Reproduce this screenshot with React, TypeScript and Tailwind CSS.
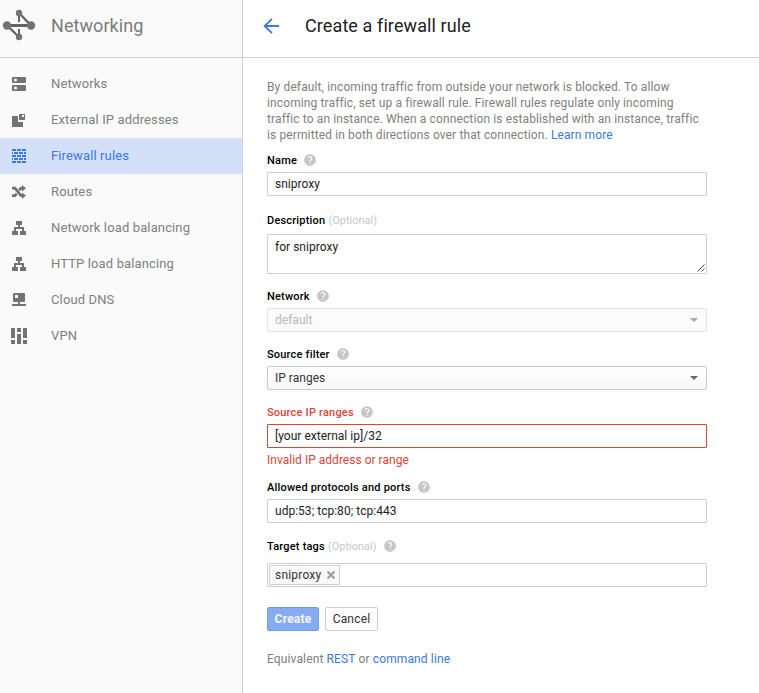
import type { ReactNode } from "react";
import { MdHelp } from "react-icons/md";

const NetworkingLogo = () => (
  <svg width="38" height="50" viewBox="0 0 38 50" fill="#737373" stroke="#636363">
    <path d="M7 25.5H31" strokeWidth="3" />
    <path d="M19 13L31 25.5M7 25.5L19 37" strokeWidth="2.4" />
    <path d="M19 13V22M19 29V37" strokeWidth="2" />
    <g stroke="none">
      <circle cx="19" cy="13" r="3.2" />
      <circle cx="19" cy="37" r="3.2" />
      <circle cx="7" cy="25.5" r="4.2" />
      <circle cx="31" cy="25.5" r="4.2" />
    </g>
  </svg>
);

const Balancing = () => <path d="M4 0h6v4H8v2h4v4h2v4H8v-4h2V8H4v2h2v4H0v-4h2V6h4V4H4z" />;

const NAV: { label: string; icon: ReactNode; active?: boolean }[] = [
  {
    label: "Networks",
    icon: (
      <path
        fillRule="evenodd"
        d="M1 0h12a1 1 0 0 1 1 1v4a1 1 0 0 1-1 1H1a1 1 0 0 1-1-1V1a1 1 0 0 1 1-1zM3.5 1.5a1.5 1.5 0 1 0 0 3a1.5 1.5 0 1 0 0-3zM1 8h12a1 1 0 0 1 1 1v4a1 1 0 0 1-1 1H1a1 1 0 0 1-1-1V9a1 1 0 0 1 1-1zM3.5 9.5a1.5 1.5 0 1 0 0 3a1.5 1.5 0 1 0 0-3z"
      />
    ),
  },
  {
    label: "External IP addresses",
    icon: <path fillRule="evenodd" d="M0 3h6v6h5v5H0zM7.5 1h5a.5.5 0 0 1 .5.5v5a.5.5 0 0 1-.5.5h-5a.5.5 0 0 1-.5-.5v-5a.5.5 0 0 1 .5-.5zM10 2v2h2V2z" />,
  },
  {
    label: "Firewall rules",
    active: true,
    icon: (
      <path d="M0 0h4v2H0zM5 0h4v2H5zM10 0h4v2h-4zM0 3h1v2H0zM2 3h4v2H2zM7 3h4v2H7zM12 3h2v2h-2zM0 6h4v2H0zM5 6h4v2H5zM10 6h4v2h-4zM0 9h1v2H0zM2 9h4v2H2zM7 9h4v2H7zM12 9h2v2h-2zM0 12h4v2H0zM5 12h4v2H5zM10 12h4v2h-4z" />
    ),
  },
  {
    label: "Routes",
    icon: (
      <>
        <path d="M0 3.2h3l6 7.4h2M0 10.6h3l1.7-2M7.2 5.4l1.8-2.2h2" fill="none" stroke="currentColor" strokeWidth="2.7" />
        <path d="M10 0l4 3.2L10 6.6zM10 7.4l4 3.2l-4 3.3z" />
      </>
    ),
  },
  { label: "Network load balancing", icon: <Balancing /> },
  { label: "HTTP load balancing", icon: <Balancing /> },
  {
    label: "Cloud DNS",
    icon: <path fillRule="evenodd" d="M2 0h10a1 1 0 0 1 1 1v7a1 1 0 0 1-1 1H8v2h6v2H0v-2h6V9H2a1 1 0 0 1-1-1V1a1 1 0 0 1 1-1zM3 2v3h3V2z" />,
  },
  {
    label: "VPN",
    icon: <path d="M-1-1h4v10h-4zM-1 11h4v4h-4zM5-1h4v4H5zM5 5h4v10H5zM11-1h4v10h-4zM11 11h4v4h-4z" />,
  },
];

function Label({ text, optional, help, error, className = "" }: { text: string; optional?: boolean; help?: boolean; error?: boolean; className?: string }) {
  return (
    <div className={`flex h-4 items-center text-[11px] leading-4 ${error ? "text-[#db4437]" : "text-black"} ${className}`}>
      <span className="pt-0.5 font-medium tracking-[0.2px]">{text}</span>
      {optional && <span className="ml-[3px] pt-0.5 tracking-normal text-[#c8c8c8]">(Optional)</span>}
      {help && <MdHelp className="ml-1.5 size-3.5 text-[#c6c6c6]" />}
    </div>
  );
}

function Select({ value, disabled }: { value: string; disabled?: boolean }) {
  return (
    <div
      className={`mt-1 flex h-6 items-center justify-between rounded-[2px] border pr-2 pl-[7px] ${
        disabled ? "border-[#e3e3e3] bg-[#fbfbfb] text-[#b9b9b9]" : "border-[#cbcbcb] bg-linear-to-b from-white to-[#f8f8f8] text-[#333]"
      }`}
    >
      <span>{value}</span>
      <svg width="8" height="4" viewBox="0 0 8 4" className={disabled ? "fill-[#a9a9a9]" : "fill-[#666]"}>
        <path d="M0 0h8L4 4z" />
      </svg>
    </div>
  );
}

const INPUT = "flex h-6 items-center rounded-[1px] border pl-[7px] text-[#222]";

export default function App() {
  return (
    <div className="flex h-[693px] w-[759px] overflow-hidden bg-white font-[Roboto,sans-serif] text-xs leading-4 tracking-[0.02px]">
      <aside className="w-[243px] shrink-0 border-r border-[#cfcfcf] bg-[#fafafa]">
        <div className="flex h-[58px] border-b border-[#cfcfcf]">
          <NetworkingLogo />
          <h2 className="ml-[13px] pt-[14px] text-lg leading-6 tracking-[0.07px] text-[#7b7b7b]">Networking</h2>
        </div>
        <nav className="pt-2">
          {NAV.map(({ label, icon, active }) => (
            <div key={label} className={`flex h-9 items-center pl-3 ${active ? "bg-[#d4e0f7] text-[#3b78e7]" : "text-[#737373]"}`}>
              <svg width="14" height="14" viewBox="0 0 14 14" fill="currentColor" className="overflow-visible">{icon}</svg>
              <span className={`ml-[25px] text-[13px] tracking-[0.13px] ${active ? "" : "text-[#808080]"}`}>{label}</span>
            </div>
          ))}
        </nav>
      </aside>
      <main className="grow">
        <header className="flex h-[58px] border-b border-[#cfcfcf] pl-5">
          <svg width="17" height="16" viewBox="0 0 17 16" fill="none" stroke="#3b78e7" strokeWidth="1.8" className="mt-[18px]">
            <path d="M16 8H2M9 0.8L1.6 8L9 15.2" />
          </svg>
          <h1 className="ml-[25px] pt-[14px] text-lg leading-6 tracking-[0.1px] text-[#212121]">Create a firewall rule</h1>
        </header>
        <div className="ml-6 w-[440px] pt-[21px]">
          <p className="whitespace-nowrap tracking-[0.12px] text-[#808080]">
            By default, incoming traffic from outside your network is blocked. To allow<br />
            incoming traffic, set up a firewall rule. Firewall rules regulate only incoming<br />
            traffic to an instance. When a connection is established with an instance, traffic<br />
            is permitted in both directions over that connection. <a className="text-[#3b78e7]">Learn more</a>
          </p>
          <Label text="Name" help className="mt-[9px]" />
          <div className={`${INPUT} mt-1 border-[#cfcfcf]`}>sniproxy</div>
          <Label text="Description" optional className="mt-4" />
          <div className="mt-1.5 flex h-10 justify-between rounded-[1px] border border-[#cfcfcf] pt-1 pl-[7px] text-[#222]">
            <span>for sniproxy</span>
            <svg width="8" height="8" viewBox="0 0 8 8" stroke="#555" className="mr-px mb-px self-end">
              <path d="M0.5 7.5L7.5 0.5M4.5 7.5L7.5 4.5" />
            </svg>
          </div>
          <Label text="Network" help className="mt-3.5" />
          <Select value="default" disabled />
          <Label text="Source filter" help className="mt-3.5" />
          <Select value="IP ranges" />
          <Label text="Source IP ranges" help error className="mt-3.5" />
          <div className={`${INPUT} mt-1 border-[#db4437]`}>[your external ip]/32</div>
          <p className="mt-1 text-[#db4437]">Invalid IP address or range</p>
          <Label text="Allowed protocols and ports" help className="mt-[11px]" />
          <div className={`${INPUT} mt-1 border-[#cfcfcf]`}>udp:53; tcp:80; tcp:443</div>
          <Label text="Target tags" optional help className="mt-[15px]" />
          <div className="mt-[9px] flex h-6 items-center rounded-[1px] border border-[#cfcfcf] pl-px">
            <span className="flex h-5 items-center rounded-[1px] border border-[#cfcfcf] bg-[#fafafa] pr-1 pl-[5px] tracking-[0.2px] text-[#333]">
              sniproxy
              <svg width="8" height="8" viewBox="0 0 8 8" stroke="#999" strokeWidth="2" className="ml-1.5">
                <path d="M0.5 0.5l7 7M7.5 0.5l-7 7" />
              </svg>
            </span>
          </div>
          <div className="mt-5 flex gap-1.5 tracking-[0.2px]">
            <button className="h-6 w-[52px] rounded-[2px] border border-[#6f9be8] bg-[#86abf0] font-bold text-white/90">Create</button>
            <button className="h-6 w-[53px] rounded-[2px] border border-[#cfcfcf] bg-linear-to-b from-white to-[#fafafa] text-[#333]">Cancel</button>
          </div>
          <p className="mt-5 tracking-[0.13px] text-[#808080]">
            Equivalent <a className="text-[#3b78e7]">REST</a> or <a className="text-[#3b78e7]">command line</a>
          </p>
        </div>
      </main>
    </div>
  );
}
